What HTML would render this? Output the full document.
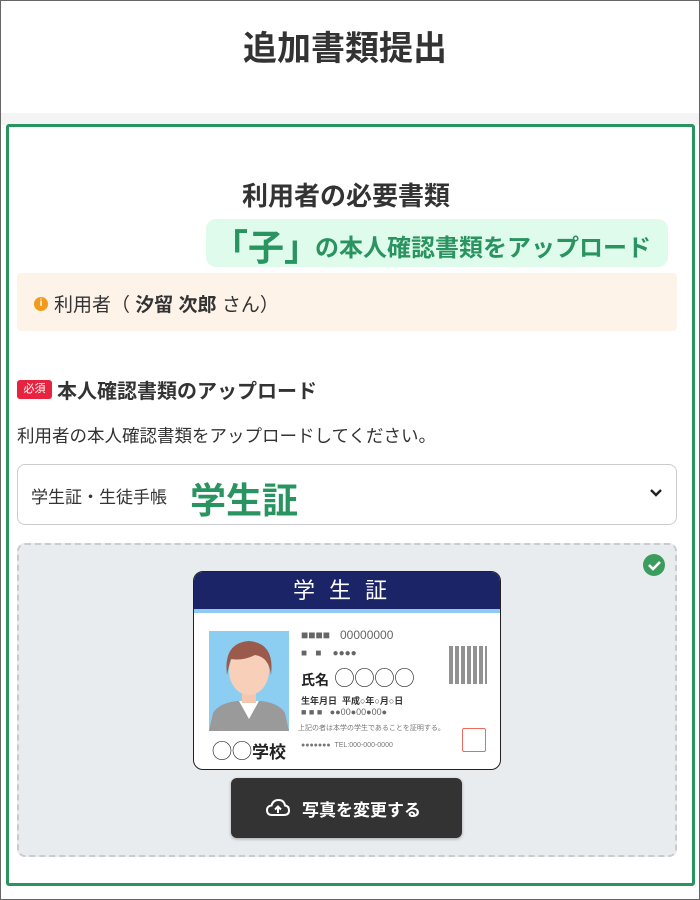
<!DOCTYPE html>
<html><head><meta charset="utf-8"><style>
*{box-sizing:border-box;margin:0;padding:0}
body{width:700px;height:900px;font-family:"Liberation Sans","Noto Sans CJK JP",sans-serif;color:#333;background:#fff;position:relative;overflow:hidden}
.frame{position:absolute;inset:0;border:1px solid #666;}
.hdr{position:absolute;left:1px;top:1px;width:688px;height:112px;text-align:center;font-size:34px;font-weight:bold;line-height:96px;color:#333}
.band{position:absolute;left:1px;top:113px;width:698px;height:12px;background:#f4f4f4}
.box{position:absolute;left:6px;top:124px;width:689px;height:762px;border:3px solid #2a9460;border-radius:3px;background:#fff}
.abs{position:absolute}
</style></head><body>
<div class="frame"></div>
<div class="band"></div>
<div class="hdr">追加書類提出</div>
<div class="box"></div>
<div class="abs" style="left:0;width:692px;top:176px;text-align:center;font-size:26px;font-weight:bold;color:#333">利用者の必要書類</div>
<div class="abs" style="left:206px;top:219px;width:462px;height:48px;background:#dffbec;border-radius:10px;color:#2a9460;font-weight:bold;white-space:nowrap">
<span class="abs" style="left:6px;top:0px;font-size:36px">「子」</span>
<span class="abs" style="left:109px;top:9px;font-size:24px">の本人確認書類をアップロード</span></div>
<div class="abs" style="left:17px;top:273px;width:660px;height:58px;background:#fdf3e8;border-radius:4px"></div>
<div class="abs" style="left:34px;top:297px;width:14px;height:14px;border-radius:50%;background:#f29a1a;color:#fff;font-size:10px;font-weight:bold;text-align:center;line-height:14px">i</div>
<div class="abs" style="left:54px;top:290px;font-size:19px;color:#333;white-space:nowrap">利用者（ <b>汐留 次郎</b> さん）</div>
<div class="abs" style="left:17px;top:380px;width:35px;height:19px;background:#e8233f;border-radius:3px;color:#fff;font-size:11px;text-align:center;line-height:19px">必須</div>
<div class="abs" style="left:57px;top:375px;font-size:20px;font-weight:bold;color:#333;white-space:nowrap">本人確認書類のアップロード</div>
<div class="abs" style="left:17px;top:423px;font-size:17.5px;color:#333;white-space:nowrap">利用者の本人確認書類をアップロードしてください。</div>
<div class="abs" style="left:17px;top:464px;width:660px;height:61px;border:1.5px solid #ccc;border-radius:8px;background:#fff"></div>
<div class="abs" style="left:31px;top:483px;font-size:17px;color:#333">学生証・生徒手帳</div>
<div class="abs" style="left:190px;top:472px;font-size:36px;font-weight:bold;color:#2a9460">学生証</div>
<svg class="abs" style="left:648px;top:487px" width="16" height="12"><path d="M3 3l5 5 5-5" stroke="#222" stroke-width="2.4" fill="none"/></svg>
<div class="abs" style="left:17px;top:543px;width:660px;height:314px;background:#e9ecef;border:2px dashed #c9cbce;border-radius:8px"></div>
<svg class="abs" style="left:643px;top:554px" width="22" height="22"><circle cx="11" cy="11" r="11" fill="#3a9d5d"/><path d="M6 11l4 4 7-7" stroke="#fff" stroke-width="2.6" fill="none"/></svg>
<div class="abs" style="left:193px;top:571px;width:308px;height:199px;border:1.5px solid #222;border-radius:10px;background:#fff;overflow:hidden">
<div style="height:37px;background:#1b2466;color:#fff;font-size:22px;text-align:center;line-height:38px;letter-spacing:14px">学生証</div>
<div style="height:4px;background:#8fcaf0"></div>
<svg class="abs" style="left:15px;top:59px" width="80" height="100"><rect width="80" height="100" fill="#8ccdf2"/><path d="M0 100 L4 82 Q10 72 28 70 L52 70 Q70 72 76 82 L80 100Z" fill="#9a9a9a"/><path d="M30 70 L40 88 L50 70Z" fill="#fff"/><rect x="33" y="56" width="14" height="16" fill="#f5c7ae"/><ellipse cx="40" cy="40" rx="20" ry="24" fill="#f8cfb8"/><path d="M18 44 Q14 12 40 10 Q66 12 62 44 Q60 26 46 24 Q34 30 22 28 Q20 34 18 44Z" fill="#9a5b4c"/></svg>
<div class="abs" style="left:18px;top:163px;font-size:17px;font-weight:bold;color:#222;white-space:nowrap"><span style="font-size:20px;font-weight:normal">◯◯</span>学校</div>
<div class="abs" style="left:107px;top:56px;font-size:12px;color:#666;white-space:nowrap">■■■■ &nbsp;&nbsp;00000000</div>
<div class="abs" style="left:107px;top:76px;font-size:10px;color:#666;white-space:nowrap">■ &nbsp;&nbsp;■ &nbsp;&nbsp;&nbsp;●●●●</div>
<div class="abs" style="left:107px;top:90px;font-size:20px;color:#222;white-space:nowrap"><b style="font-size:14px">氏名</b> ◯◯◯◯</div>
<div class="abs" style="left:107px;top:122px;font-size:9px;font-weight:bold;color:#333;white-space:nowrap">生年月日 &nbsp;平成○年○月○日</div>
<div class="abs" style="left:107px;top:135px;font-size:9px;color:#666;white-space:nowrap">■ ■ ■ &nbsp;&nbsp;●●00●00●00●</div>
<div class="abs" style="left:104px;top:151px;font-size:7px;color:#777;white-space:nowrap">上記の者は本学の学生であることを証明する。</div>
<div class="abs" style="left:107px;top:170px;font-size:7px;color:#777;white-space:nowrap">●●●●●●● &nbsp;TEL:000-000-0000</div>
<div class="abs" style="left:255px;top:74px;width:38px;height:38px;background:repeating-linear-gradient(90deg,#777 0 4px,#fff 4px 6px),#777;opacity:.8"></div>
<div class="abs" style="left:268px;top:156px;width:24px;height:24px;border:1.5px solid #ec6a5e;border-radius:2px"></div>
</div>
<div class="abs" style="left:231px;top:778px;width:231px;height:60px;background:#333;border-radius:6px;box-shadow:0 1px 3px rgba(0,0,0,.3)"></div>
<svg class="abs" style="left:266px;top:798px" width="24" height="20" viewBox="0 0 24 20"><path d="M6 17 Q1 17 1 12 Q1 8 5.5 7.5 Q7 2 12.5 2 Q18 2 19 7.5 Q23 8 23 12.5 Q23 17 18 17Z" fill="none" stroke="#fff" stroke-width="2"/><path d="M12 15V9M9 11.5l3-3 3 3" stroke="#fff" stroke-width="2" fill="none"/></svg>
<div class="abs" style="left:302px;top:796px;font-size:17px;font-weight:bold;color:#fff;white-space:nowrap">写真を変更する</div>
</body></html>
